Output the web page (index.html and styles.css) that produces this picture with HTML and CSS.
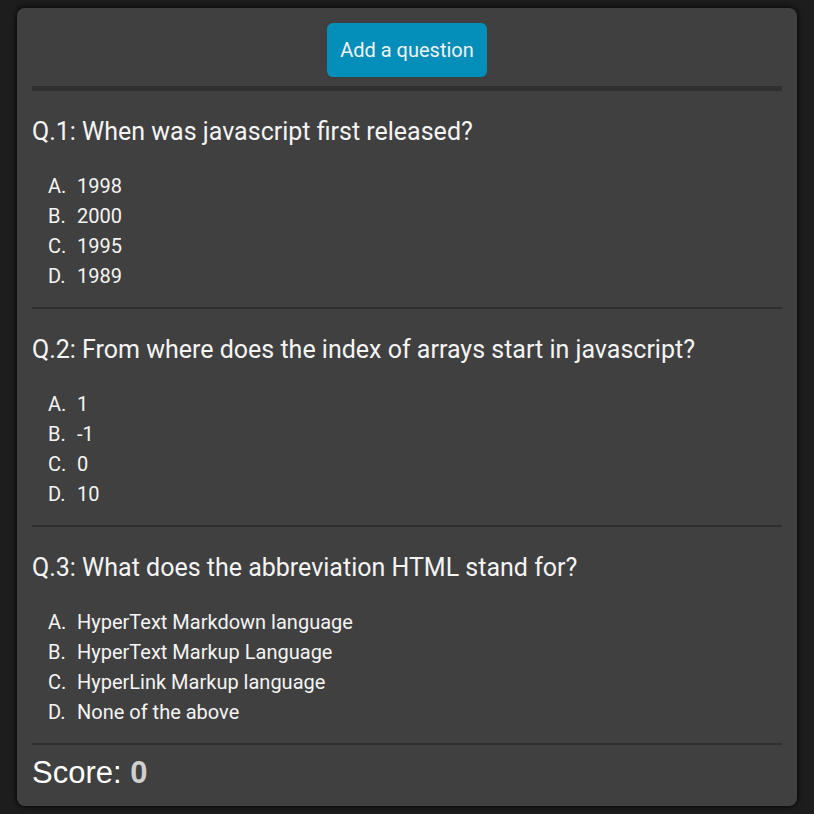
FILE: index.html
```html
<!DOCTYPE html>
<html lang="en">
<head>
<meta charset="utf-8">
<title>Quiz</title>
<link rel="stylesheet" href="styles.css">
</head>
<body>
<main class="card">
  <header class="toolbar">
    <button class="add-btn" type="button">Add a question</button>
  </header>

  <section class="question">
    <h2 class="q-title">Q.1: When was javascript first released?</h2>
    <ul class="options">
      <li><span class="letter">A.</span>1998</li>
      <li><span class="letter">B.</span>2000</li>
      <li><span class="letter">C.</span>1995</li>
      <li><span class="letter">D.</span>1989</li>
    </ul>
  </section>

  <section class="question">
    <h2 class="q-title">Q.2: From where does the index of arrays start in javascript?</h2>
    <ul class="options">
      <li><span class="letter">A.</span>1</li>
      <li><span class="letter">B.</span>-1</li>
      <li><span class="letter">C.</span>0</li>
      <li><span class="letter">D.</span>10</li>
    </ul>
  </section>

  <section class="question">
    <h2 class="q-title">Q.3: What does the abbreviation HTML stand for?</h2>
    <ul class="options">
      <li><span class="letter">A.</span>HyperText Markdown language</li>
      <li><span class="letter">B.</span>HyperText Markup Language</li>
      <li><span class="letter">C.</span>HyperLink Markup language</li>
      <li><span class="letter">D.</span>None of the above</li>
    </ul>
  </section>

  <footer class="score">Score: <span class="score-value">0</span></footer>
</main>
</body>
</html>
```

FILE: styles.css
```css
html, body {
  margin: 0;
  padding: 0;
}

body {
  background: #1d1d1d;
  padding: 8px 17px;
  font-family: Roboto, "Liberation Sans", Arial, sans-serif;
  color: #f4f4f4;
}

.card {
  background: #404040;
  border-radius: 8px;
  box-shadow: 0 0 6px #000;
  padding: 15px;
}

.toolbar {
  display: flex;
  justify-content: center;
  padding-bottom: 9px;
  border-bottom: 5px solid #2f2f2f;
}

.add-btn {
  background: #048fba;
  color: #f2f2f2;
  border: none;
  border-radius: 6px;
  font-family: Roboto, "Liberation Sans", Arial, sans-serif;
  font-size: 20px;
  line-height: 24px;
  padding: 15px 13px;
  cursor: pointer;
}

.question {
  padding: 27px 0 16px;
  border-bottom: 2px solid #2f2f2f;
}

.q-title {
  margin: 0 0 25px;
  font-size: 25px;
  font-weight: 400;
  line-height: 28px;
}

.options {
  list-style: none;
  margin: 0;
  padding: 0 0 0 16px;
}

.options li {
  font-size: 20px;
  line-height: 30px;
  display: flex;
}

.letter {
  width: 29px;
  flex: none;
}

.score {
  padding-top: 10px;
  font-family: "Liberation Sans", Arial, sans-serif;
  font-size: 31px;
  line-height: 36px;
  color: #ffffff;
}

.score-value {
  color: #cfcfcf;
  font-weight: 700;
}
```
